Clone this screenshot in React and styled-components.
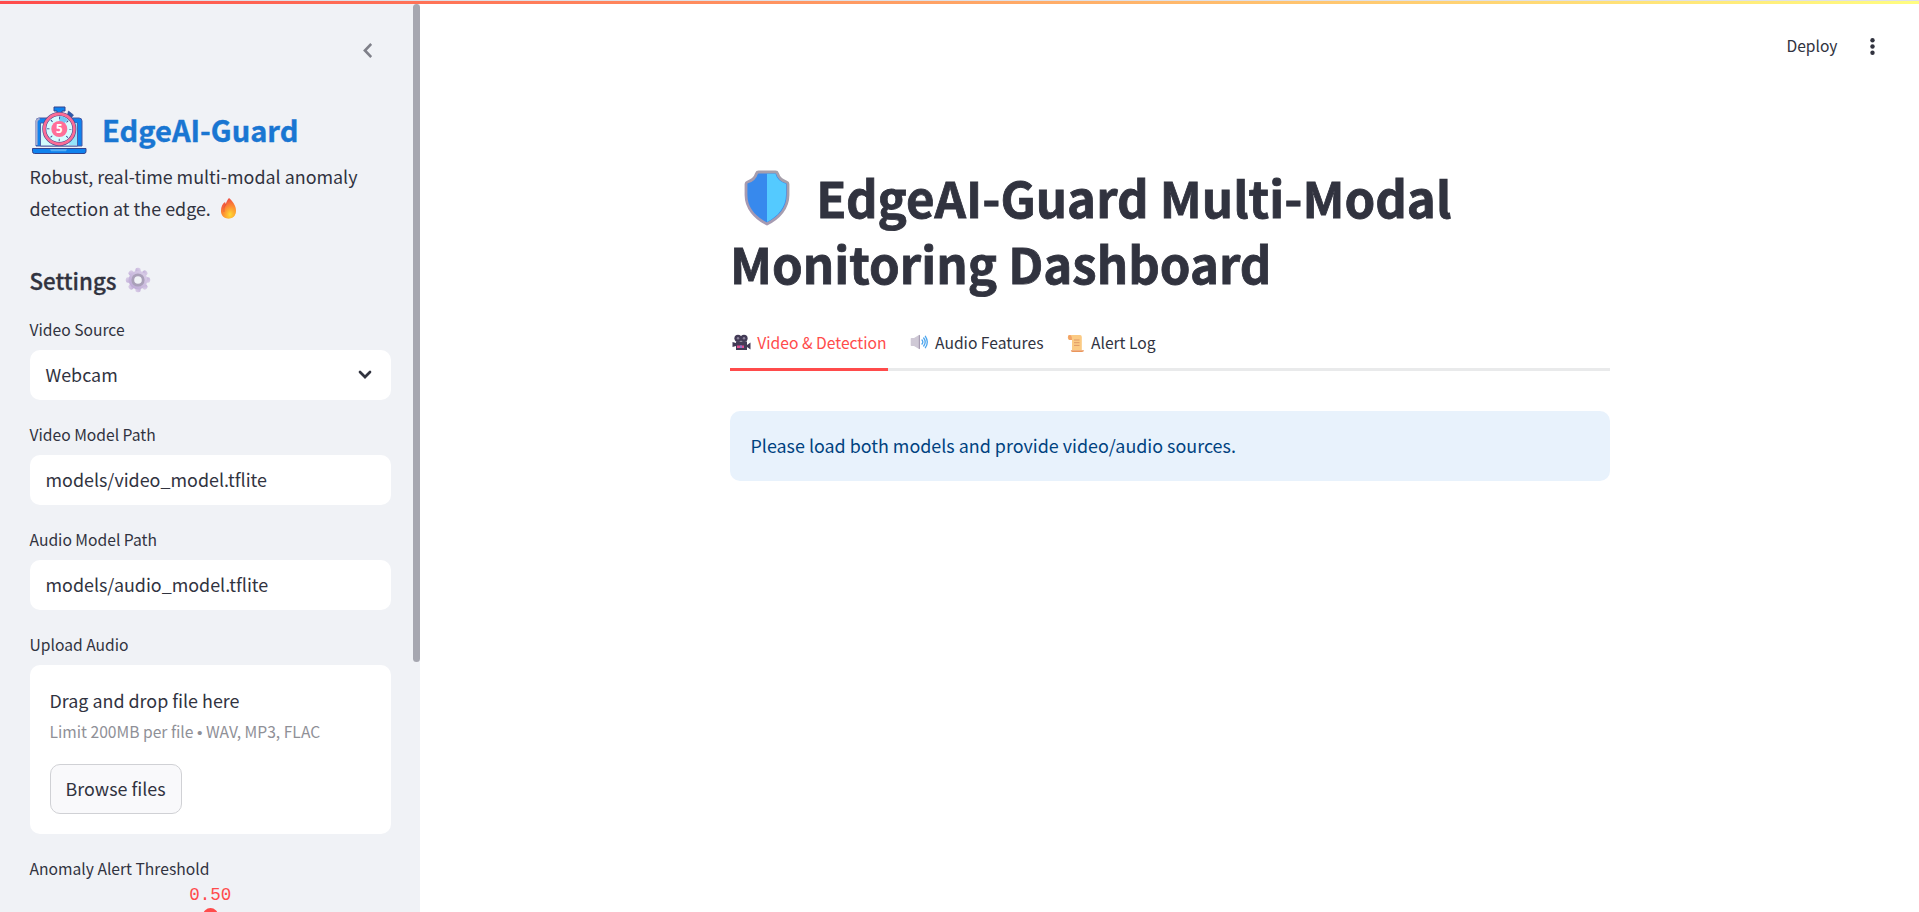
import React from "react";
import styled, { createGlobalStyle } from "styled-components";

const Global = createGlobalStyle`
  *, *::before, *::after { box-sizing: border-box; }
  html, body { margin: 0; height: 100%; overflow: hidden; background: #fff; }
  body {
    font-family: "Noto Sans CJK SC", "Noto Sans", sans-serif;
    font-size: 17.9px;
    text-indent: -0.5px;
    color: #31333f;
  }
  svg { display: block; flex: none; text-indent: 0; }
`;

const Page = styled.div`
  display: flex;
  flex-direction: column;
  width: 100vw;
  height: 912px;
  overflow: hidden;
`;
const TopLine = styled.div`
  flex: none;
  height: 4px;
  border-top: 1px solid #dfe1e8;
  background: linear-gradient(90deg, #ff4b4b, #fffd80);
`;
const Columns = styled.div`
  flex: 1;
  min-height: 0;
  display: flex;
`;
const Sidebar = styled.aside`
  flex: none;
  width: 420px;
  display: flex;
  background: #f0f2f6;
  overflow: hidden;
`;
const SideContent = styled.div`
  width: 413px;
  padding: 0 22px 0 30px;
`;
const Scrollbar = styled.div`
  width: 7px;
  height: 658px;
  border-radius: 4px;
  background: #a6a7b0;
`;
const SideHeader = styled.div`
  display: flex;
  justify-content: flex-end;
  height: 97px;
  padding: 39px 19px 0 0;
`;
const Brand = styled.div`
  display: flex;
  height: 59px;
  gap: 13.500px;
  color: #1976d2;
  svg { margin-top: 1px; }
`;
const BrandName = styled.h2`
  margin: 0;
  padding-top: 2px;
  font-size: 29.050px;
  line-height: 52px;
  font-weight: 700;
  -webkit-text-stroke: 0.4px currentColor;
`;
const Intro = styled.p`
  margin: 0;
  height: 66px;
  line-height: 32px;
  white-space: nowrap;
`;
const IntroLine = styled.span`
  display: flex;
  gap: 9px;
  align-items: center;
`;
const SettingsTitle = styled.h3`
  margin: 0;
  display: flex;
  align-items: center;
  gap: 8.500px;
  height: 90px;
  padding: 36px 0 18px;
  font-size: 22.300px;
  line-height: 36px;
  font-weight: 500;
  -webkit-text-stroke: 0.3px currentColor;
`;
const Label = styled.div`
  height: 34px;
  line-height: 28px;
  font-size: 15.650px;
  white-space: nowrap;
`;
const Field = styled.div`
  display: flex;
  align-items: center;
  justify-content: space-between;
  height: 50px;
  margin-bottom: 21px;
  padding: 0 19px 2px 16px;
  border-radius: 10px;
  background: #fff;
  svg { margin-top: 2px; }
`;
const Uploader = styled.div`
  height: 169px;
  margin-bottom: 21px;
  padding: 20px;
  border-radius: 10px;
  background: #fff;
`;
const DropText = styled.div`
  height: 32px;
  line-height: 31px;
`;
const Limit = styled.div`
  height: 47px;
  line-height: 29px;
  font-size: 15.650px;
  color: #8f9097;
  white-space: nowrap;
`;
const Bullet = styled.span`
  font-family: "Liberation Sans", sans-serif;
  font-size: 15.500px;
  line-height: 1;
`;
const Browse = styled.button`
  display: block;
  width: 132px;
  height: 50px;
  padding: 0 0 2px;
  border: 1px solid #d0d1d5;
  border-radius: 10px;
  background: #f9f9fb;
  color: inherit;
  font: inherit;
  text-indent: -0.800px;
`;
const Slider = styled.div`
  display: flex;
  flex-direction: column;
  align-items: center;
  margin-top: -9px;
  color: #ff4b4b;
  font: 17.500px/22px "Liberation Mono", monospace;
`;
const Value = styled.span`
  height: 28px;
  padding-top: 4px;
`;
const Thumb = styled.div`
  width: 15px;
  height: 15px;
  border-radius: 50%;
  background: #ff4b4b;
`;
const Main = styled.main`
  flex: 1;
  display: flex;
  flex-direction: column;
`;
const Toolbar = styled.header`
  display: flex;
  justify-content: flex-end;
  gap: 32.500px;
  height: 160px;
  padding: 28px 44px 0 0;
  font-size: 15.620px;
  line-height: 26px;
  text-indent: 0;
  svg { margin-top: 6px; }
`;
const Block = styled.section`
  width: 880px;
  margin-left: 310px;
`;
const Title = styled.h1`
  margin: 0;
  height: 154px;
  font-size: 49.180px;
  line-height: 66px;
  font-weight: 700;
  white-space: nowrap;
  text-indent: 0;
  -webkit-text-stroke: 0.8px currentColor;
  svg { margin-top: 2px; -webkit-text-stroke: 0; }
`;
const TitleLine = styled.span`
  display: flex;
  align-items: center;
  height: 66px;
  gap: 26.300px;
  padding-left: ${(p) => p.$pad || 0}px;
`;
const Tabs = styled.nav`
  display: flex;
  gap: 19.500px;
  height: 53px;
  box-shadow: inset 0 -3px #e9eaeb;
  text-indent: 0;
`;
const Tab = styled.div`
  display: flex;
  gap: 6.300px;
  height: 53px;
  padding: 10px 1.700px 0 2px;
  line-height: 30px;
  font-size: 15.640px;
  white-space: nowrap;
  color: ${(p) => (p.$on ? "#ff4b4b" : "inherit")};
  border-bottom: 3px solid ${(p) => (p.$on ? "#ff4b4b" : "transparent")};
  svg { margin-top: 6px; }
`;
const Notice = styled.div`
  height: 70px;
  margin-top: 40px;
  padding: 0 21px 2px;
  line-height: 68px;
  border-radius: 10px;
  background: #e8f2fc;
  color: #004280;
`;

const LaptopTimer = () => (
  <svg width="59" height="52" viewBox="0 0 59 52">
    <path d="M6 44V19q0-3 3-3h40q3 0 3 3v25z" fill="#0f82ee" stroke="#4a56a0" strokeWidth="1" />
    <path d="M6.600 43V20q0-3 3-3" fill="none" stroke="#a9adcf" strokeWidth="2" />
    <path d="M10.500 44V21h37v23z" fill="#d3fafc" stroke="#4a56a0" strokeWidth=".9" />
    <path d="M42 21h5v22h-8z" fill="#96e4fb" />
    <path d="M24 5h11v4h-3v5h-5V9h-3z" fill="#0f82ee" stroke="#35438c" strokeWidth="1" strokeLinejoin="round" />
    <path d="M38.500 9l5 4-2 2.500-4-3z" fill="#2b5bb0" stroke="#35438c" strokeWidth=".6" />
    <circle cx="29.300" cy="27" r="15" fill="#d6fbff" stroke="#4b4a8c" strokeWidth="4" />
    <circle cx="29.300" cy="27" r="15" fill="none" stroke="#fb6c96" strokeWidth="2.800" />
    <path d="M29.300 14a13 13 0 0 1 8.500 3.500L29.300 27z" fill="#72c9f6" />
    <circle cx="29.300" cy="27" r="11" fill="none" stroke="#35438c" strokeWidth="2.400" strokeDasharray=".9 7.739" strokeDashoffset=".45" />
    <circle cx="29.300" cy="27" r="8" fill="#ff6e98" />
    <text x="29.300" y="31.100" textAnchor="middle" fill="#fff" fontFamily="Open Sans" fontSize="11.500" fontWeight="700">5</text>
    <path d="M2.500 46.500h53.500v3q0 2-2 2H4.500q-2 0-2-2z" fill="#0f82ee" stroke="#35438c" strokeWidth="1" />
    <path d="M20 47.200h17l-1 2H21z" fill="#55aef5" />
  </svg>
);
const Fire = () => (
  <svg width="17" height="21" viewBox="0 0 17 21">
    <defs>
      <linearGradient id="fire" x1=".2" y1="0" x2=".6" y2="1">
        <stop offset="0" stopColor="#e9474a" />
        <stop offset=".5" stopColor="#fb7134" />
        <stop offset="1" stopColor="#fda52e" />
      </linearGradient>
      <radialGradient id="flame" cx=".6" cy=".8" r=".7">
        <stop offset="0" stopColor="#ffdc35" />
        <stop offset="1" stopColor="#ff9230" stopOpacity="0" />
      </radialGradient>
    </defs>
    <path d="M9 0c3 2.500 7 7.500 7 12.500C16 17.500 13 20.500 8.500 20.500S1 17.500 1 13C1 9 2.500 5.500 5 4l.8 2C6.500 3.500 7.500 1.500 9 0z" fill="url(#fire)" />
    <path d="M9 0c3 2.500 7 7.500 7 12.500C16 17.500 13 20.500 8.500 20.500S1 17.500 1 13c2-4 5-3 8-13z" fill="url(#flame)" />
    <path d="M6 6q-3 4-2 8" fill="none" stroke="#d9403b" strokeWidth=".8" opacity=".6" />
  </svg>
);
const Gear = () => (
  <svg width="26" height="26" viewBox="-13 -13 26 26">
    <defs>
      <linearGradient id="gear" x1="1" y1="0" x2="0" y2="1">
        <stop offset="0" stopColor="#ddd2e9" />
        <stop offset="1" stopColor="#b9a4d3" />
      </linearGradient>
    </defs>
    <g fill="url(#gear)">
      {[0, 45, 90, 135, 180, 225, 270, 315].map((a) => (
        <rect key={a} x="-2.700" y="-12.200" width="5.400" height="7" rx="2.200" transform={`rotate(${a})`} />
      ))}
      <circle r="9.300" />
    </g>
    <circle r="5.200" fill="#f0f2f6" stroke="#aaa0b9" strokeWidth="2.800" />
  </svg>
);
const Shield = () => (
  <svg width="46" height="56" viewBox="0 0 46 56">
    <defs>
      <linearGradient id="rim" x1="1" y1="0" x2="0" y2="1">
        <stop offset="0" stopColor="#a5a1aa" />
        <stop offset="1" stopColor="#a898b4" />
      </linearGradient>
    </defs>
    <path d="M14.500 2h17q1.500 0 2 1.500c1.500 5 4 7 9 8.500q1.500.5 1.500 2v11c0 13-9 23-21 29C11 48 2 38 2 25V14q0-1.500 1.500-2c5-1.500 7.500-3.500 9-8.500q.5-1.500 2-1.500z" fill="#3789ed" stroke="url(#rim)" strokeWidth="2.800" strokeLinejoin="round" />
    <path d="M23 3.800h8.500c1.500 5 4.500 8 10.500 10v11C42 37 34 46.500 23 52z" fill="#54caff" />
  </svg>
);
const Camera = () => (
  <svg width="19" height="18" viewBox="0 0 19 18">
    <g fill="#433b56">
      <circle cx="6" cy="4.300" r="3.600" /><circle cx="12" cy="4.300" r="3.600" />
      <path d="M4 7.500h11v3.500l3.500-2.500v7L15 13v3H4v-4l-3.500 1V8L4 9z" />
    </g>
    <circle cx="6" cy="4.300" r="1.200" fill="#8b829b" /><circle cx="12" cy="4.300" r="1.200" fill="#8b829b" />
    <path d="M5 11.500h7V14H5z" fill="#df4e91" /><path d="M8 11.500h2V14H8z" fill="#8e78cf" />
  </svg>
);
const Speaker = () => (
  <svg width="19" height="18" viewBox="0 0 19 18">
    <path d="M1.500 4h2.500l5-3q1-.5 1 .5v13q0 1-1 .5l-5-3H1.500q-.8 0-.8-.8V4.800q0-.8.800-.8z" fill="#cfc9d6" />
    <path d="M8.800 1.200q1.200-.4 1.200.8v12q0 1.200-1.200.8z" fill="#a79cb2" />
    <g fill="none" stroke="#4ba5ee" strokeWidth="1.300" strokeLinecap="round">
      <path d="M12 6q1.700 2 0 4M13.700 4q3 4 0 8M15.400 2.300q3.800 5.700 0 11.400" />
    </g>
  </svg>
);
const Scroll = () => (
  <svg width="18" height="19" viewBox="0 0 18 19">
    <path d="M2 1h11q1.800 0 1.800 2v13H5V6H2Q-.5 3.500 2 1z" fill="#fbca83" />
    <path d="M1 2.500Q1 1 2.500 1 5 1 5 6H2.500Q1 5 1 2.500z" fill="#f2a265" />
    <path d="M5.500 18q-1.700 0-1.700-1.700H17q0 1.700-2 1.700z" fill="#ea965b" />
    <path d="M7 6h5.500M7 8.700h5.500M7 11.400h5.500" stroke="#de9866" strokeWidth="1" />
  </svg>
);
const CollapseIcon = () => (
  <svg width="9" height="15" viewBox="0 0 9 15">
    <path d="M8.200 1L1.900 7.500 8.200 14" fill="none" stroke="#7f8089" strokeWidth="2.600" />
  </svg>
);
const ExpandIcon = () => (
  <svg width="14" height="10" viewBox="0 0 14 10">
    <path d="M2 2l5 5 5-5" fill="none" stroke="#31333f" strokeWidth="2.700" strokeLinecap="round" />
  </svg>
);
const MenuIcon = () => (
  <svg width="5" height="18" viewBox="0 0 5 18">
    <g fill="#31333f"><circle cx="2.500" cy="2.300" r="2.200" /><circle cx="2.500" cy="8.500" r="2.200" /><circle cx="2.500" cy="14.700" r="2.200" /></g>
  </svg>
);

export default function App() {
  return (
    <Page>
      <Global />
      <TopLine />
      <Columns>
        <Sidebar>
          <SideContent>
            <SideHeader><CollapseIcon /></SideHeader>
            <Brand><LaptopTimer /><BrandName>EdgeAI-Guard</BrandName></Brand>
            <Intro>
              <IntroLine>Robust, real-time multi-modal anomaly</IntroLine>
              <IntroLine>detection at the edge. <Fire /></IntroLine>
            </Intro>
            <SettingsTitle>Settings <Gear /></SettingsTitle>
            <Label>Video Source</Label>
            <Field>Webcam<ExpandIcon /></Field>
            <Label>Video Model Path</Label>
            <Field>models/video_model.tflite</Field>
            <Label>Audio Model Path</Label>
            <Field>models/audio_model.tflite</Field>
            <Label>Upload Audio</Label>
            <Uploader>
              <DropText>Drag and drop file here</DropText>
              <Limit>Limit 200MB per file <Bullet>•</Bullet> WAV, MP3, FLAC</Limit>
              <Browse>Browse files</Browse>
            </Uploader>
            <Label>Anomaly Alert Threshold</Label>
            <Slider><Value>0.50</Value><Thumb /></Slider>
          </SideContent>
          <Scrollbar />
        </Sidebar>
        <Main>
          <Toolbar>Deploy<MenuIcon /></Toolbar>
          <Block>
            <Title>
              <TitleLine $pad={14}><Shield />EdgeAI-Guard Multi-Modal</TitleLine>
              <TitleLine>Monitoring Dashboard</TitleLine>
            </Title>
            <Tabs>
              <Tab $on><Camera />Video &amp; Detection</Tab>
              <Tab><Speaker />Audio Features</Tab>
              <Tab><Scroll />Alert Log</Tab>
            </Tabs>
            <Notice>Please load both models and provide video/audio sources.</Notice>
          </Block>
        </Main>
      </Columns>
    </Page>
  );
}
